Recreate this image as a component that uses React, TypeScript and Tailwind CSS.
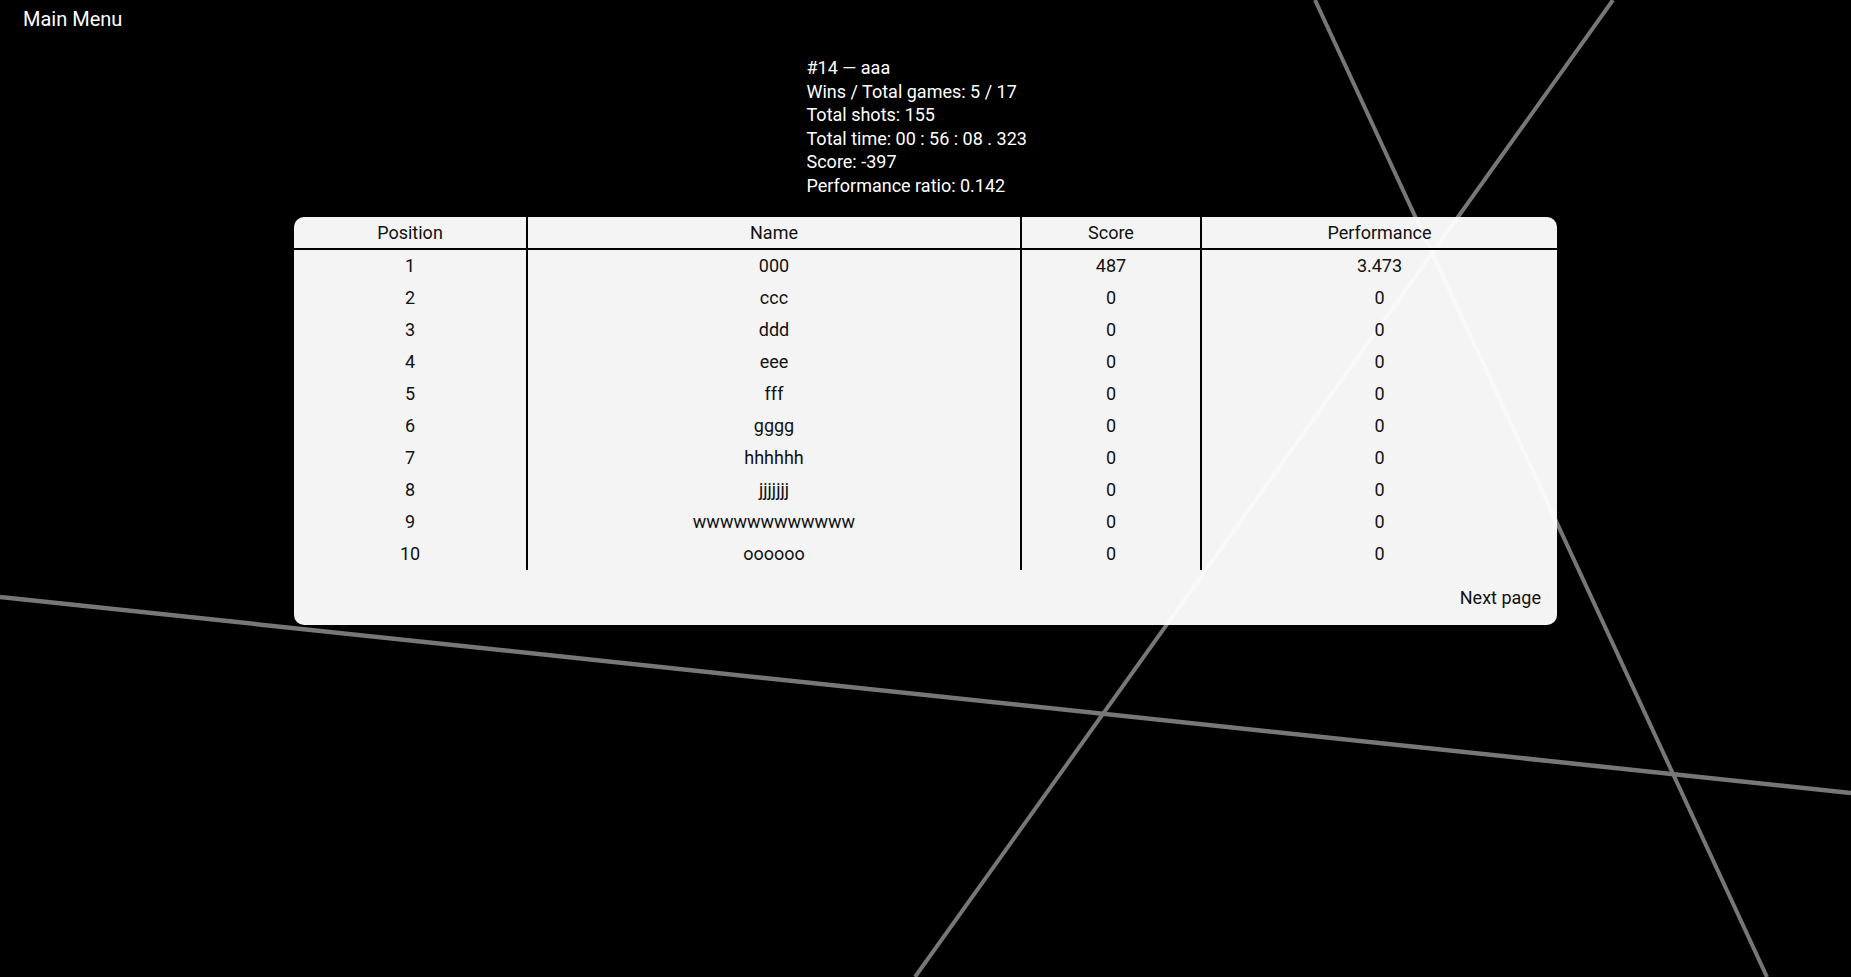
const rows = [
  { pos: 1, name: '000', score: '487', perf: '3.473' },
  { pos: 2, name: 'ccc', score: '0', perf: '0' },
  { pos: 3, name: 'ddd', score: '0', perf: '0' },
  { pos: 4, name: 'eee', score: '0', perf: '0' },
  { pos: 5, name: 'fff', score: '0', perf: '0' },
  { pos: 6, name: 'gggg', score: '0', perf: '0' },
  { pos: 7, name: 'hhhhhh', score: '0', perf: '0' },
  { pos: 8, name: 'jjjjjjj', score: '0', perf: '0' },
  { pos: 9, name: 'wwwwwwwwwwww', score: '0', perf: '0' },
  { pos: 10, name: 'oooooo', score: '0', perf: '0' },
];

const stats = [
  '#14 — aaa',
  'Wins / Total games: 5 / 17',
  'Total shots: 155',
  'Total time: 00 : 56 : 08 . 323',
  'Score: -397',
  'Performance ratio: 0.142',
];

const Background = () => (
  <svg className="absolute inset-0 w-full h-full" viewBox="0 0 1851 977" preserveAspectRatio="none">
    <line x1="1315" y1="0" x2="1767" y2="977" stroke="#777" strokeWidth="4" />
    <line x1="1613" y1="0" x2="915" y2="977" stroke="#777" strokeWidth="4" />
    <line x1="0" y1="597" x2="1851" y2="793" stroke="#777" strokeWidth="4.5" />
  </svg>
);

const App = () => {
  return (
    <div
      className="relative h-[977px] w-full overflow-hidden bg-black"
      style={{ fontFamily: 'Roboto, "Open Sans", sans-serif' }}
    >
      <Background />

      <div className="relative">
        {/* Header */}
        <div className="h-14 pt-[7px] pl-[23px]">
          <button className="text-[20px] leading-6 text-white">Main Menu</button>
        </div>

        {/* Player stats */}
        <div className="mx-auto w-[238px] text-left text-[18px] leading-[23.5px] text-white">
          {stats.map((s) => (
            <div key={s}>{s}</div>
          ))}
        </div>

        {/* Leaderboard */}
        <div className="mx-auto mt-[20px] w-[1263px] rounded-[10px] bg-white/[0.957] text-[18px] text-[#111]">
          <div className="grid grid-cols-[234px_494px_180px_355px] border-b-2 border-black">
            <div className="h-[31px] border-r-2 border-black text-center leading-[31px]">Position</div>
            <div className="h-[31px] border-r-2 border-black text-center leading-[31px]">Name</div>
            <div className="h-[31px] border-r-2 border-black text-center leading-[31px]">Score</div>
            <div className="h-[31px] text-center leading-[31px]">Performance</div>
          </div>
          <div className="grid grid-cols-[234px_494px_180px_355px]">
            <div className="border-r-2 border-black">
              {rows.map((r) => (
                <div key={r.pos} className="h-8 text-center leading-8">{r.pos}</div>
              ))}
            </div>
            <div className="border-r-2 border-black">
              {rows.map((r) => (
                <div key={r.pos} className="h-8 text-center leading-8">{r.name}</div>
              ))}
            </div>
            <div className="border-r-2 border-black">
              {rows.map((r) => (
                <div key={r.pos} className="h-8 text-center leading-8">{r.score}</div>
              ))}
            </div>
            <div>
              {rows.map((r) => (
                <div key={r.pos} className="h-8 text-center leading-8">{r.perf}</div>
              ))}
            </div>
          </div>
          <div className="flex justify-end px-4 pt-4 pb-[15px]">
            <button className="leading-6">Next page</button>
          </div>
        </div>
      </div>
    </div>
  );
};

export default App;
